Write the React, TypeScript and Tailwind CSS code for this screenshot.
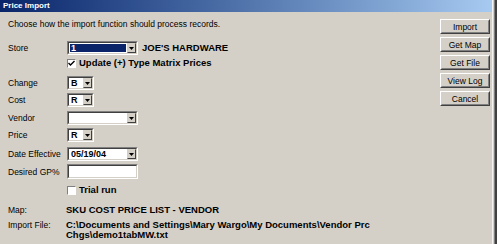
import React from "react"

const Arrow = () => (
  <svg width="5" height="3" viewBox="0 0 5 3">
    <path d="M0 0h5L2.5 3z" fill="#000" />
  </svg>
)

// sunken field, win2k style
function Field({ w, children, h = 14 }: { w: number; children?: React.ReactNode; h?: number }) {
  return (
    <div
      className="border border-t-[#808080] border-l-[#808080] border-b-white border-r-white"
      style={{ width: w, height: h }}
    >
      <div className="flex h-full border border-t-[#404040] border-l-[#404040] border-b-[#d4d0c8] border-r-[#d4d0c8] bg-white">
        {children}
      </div>
    </div>
  )
}

function Combo({ w, value, selected }: { w: number; value?: string; selected?: boolean }) {
  return (
    <Field w={w}>
      <div
        className={
          selected
            ? "flex-1 m-[1px] bg-[#0a246a] text-white pl-[1px] text-[9px] font-bold leading-[9px]"
            : "flex-1 pl-[2px] text-[9px] font-bold leading-[10px] text-black"
        }
      >
        {value}
      </div>
      <div className="w-[9px] h-full flex items-center justify-center border border-t-[#d4d0c8] border-l-[#d4d0c8] border-b-[#404040] border-r-[#404040] bg-[#d4d0c8]">
        <Arrow />
      </div>
    </Field>
  )
}

function Check({ checked }: { checked?: boolean }) {
  return (
    <div className="w-[9px] h-[9px] bg-white border border-t-[#808080] border-l-[#808080] border-b-white border-r-white flex items-center justify-center">
      {checked && (
        <svg width="7" height="7" viewBox="0 0 7 7">
          <path d="M0.5 3l2 2l4-4" stroke="#000" strokeWidth="1.4" fill="none" />
        </svg>
      )}
    </div>
  )
}

function Row({ label, mt, children, h = 14 }: { label: string; mt: string; children: React.ReactNode; h?: number }) {
  return (
    <div className={`flex items-center ${mt}`} style={{ height: h }}>
      <div className="w-[59px] text-[8.5px] leading-[10px]">{label}</div>
      {children}
    </div>
  )
}

function Btn({ label }: { label: string }) {
  return (
    <div className="h-[15px] w-[50px] border border-t-white border-l-white border-b-[#404040] border-r-[#404040]">
      <div className="h-full flex items-center justify-center border border-transparent border-b-[#808080] border-r-[#808080] text-[8.5px] leading-[10px]">
        {label}
      </div>
    </div>
  )
}

export default function App() {
  return (
    <div className="w-[497px] h-[244px] flex overflow-hidden bg-[#d4d0c8] text-black font-['Liberation_Sans',Arial,sans-serif]">
      <div className="w-[492px] flex flex-col">
        {/* title bar */}
        <div className="h-[12px] bg-gradient-to-r from-[#0a246a] to-[#a6caf0] pl-[3px] text-white font-bold text-[8px] leading-[12px]">
          Price Import
        </div>

        <div className="flex flex-1">
          {/* form */}
          <div className="flex-1 flex flex-col pl-[8px]">
            <div className="mt-[7px] text-[8.5px] leading-[10px]">
              Choose how the import function should process records.
            </div>

            <Row label="Store" mt="mt-[12px]">
              <Combo w={71} value="1" selected />
              <span className="ml-[4px] text-[9.5px] font-bold">JOE'S HARDWARE</span>
            </Row>

            <div className="flex items-center mt-[2px] h-[13px] pl-[59px]">
              <Check checked />
              <span className="ml-[3px] text-[9.5px] font-bold">Update (+) Type Matrix Prices</span>
            </div>

            <Row label="Change" mt="mt-[6px]">
              <Combo w={27} value="B" />
            </Row>
            <Row label="Cost" mt="mt-[3px]">
              <Combo w={27} value="R" />
            </Row>
            <Row label="Vendor" mt="mt-[4px]">
              <Combo w={71} />
            </Row>
            <Row label="Price" mt="mt-[3px]">
              <Combo w={27} value="R" />
            </Row>
            <Row label="Date Effective" mt="mt-[5px]">
              <Combo w={71} value="05/19/04" />
            </Row>
            <Row label="Desired GP%" mt="mt-[3px]" h={15}>
              <Field w={71} h={15} />
            </Row>

            <div className="flex items-center mt-[5px] h-[12px] pl-[59px]">
              <Check />
              <span className="ml-[3px] text-[9.5px] font-bold">Trial run</span>
            </div>

            <div className="flex mt-[8px] leading-[12px]">
              <div className="w-[58px] text-[8.5px]">Map:</div>
              <div className="text-[9.5px] font-bold">SKU COST PRICE LIST - VENDOR</div>
            </div>

            <div className="flex mt-[4px] leading-[10px]">
              <div className="w-[58px] text-[8.5px]">Import File:</div>
              <div className="text-[9.5px] font-bold">
                C:\Documents and Settings\Mary Wargo\My Documents\Vendor Prc
                <br />
                Chgs\demo1tabMW.txt
              </div>
            </div>
          </div>

          {/* buttons */}
          <div className="flex flex-col gap-[3px] pt-[7px] mr-[2px]">
            <Btn label="Import" />
            <Btn label="Get Map" />
            <Btn label="Get File" />
            <Btn label="View Log" />
            <Btn label="Cancel" />
          </div>
        </div>
      </div>

      {/* window right edge */}
      <div className="flex">
        <div className="w-[1px] bg-[#f4f3ef]" />
        <div className="w-[1px] bg-[#d4d0c8]" />
        <div className="w-[1px] bg-[#808080]" />
        <div className="w-[2px] bg-[#404040]" />
      </div>
    </div>
  )
}
